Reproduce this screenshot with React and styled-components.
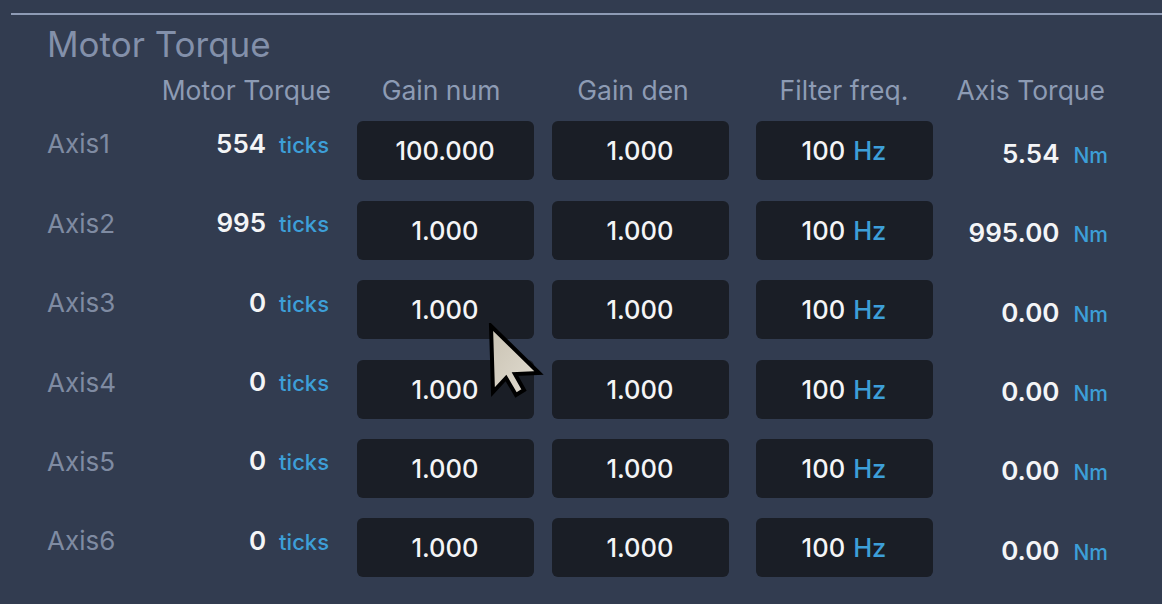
import React from 'react';
import styled, { createGlobalStyle } from 'styled-components';

const rows = [
    { axis: 'Axis1', ticks: '554', num: '100.000', den: '1.000', freq: '100', torque: '5.54' },
    { axis: 'Axis2', ticks: '995', num: '1.000', den: '1.000', freq: '100', torque: '995.00' },
    { axis: 'Axis3', ticks: '0', num: '1.000', den: '1.000', freq: '100', torque: '0.00' },
    { axis: 'Axis4', ticks: '0', num: '1.000', den: '1.000', freq: '100', torque: '0.00' },
    { axis: 'Axis5', ticks: '0', num: '1.000', den: '1.000', freq: '100', torque: '0.00' },
    { axis: 'Axis6', ticks: '0', num: '1.000', den: '1.000', freq: '100', torque: '0.00' },
];

const Cursor = () => (
    <CursorWrap>
        <svg width="60" height="80" viewBox="0 0 60 80">
            <defs>
                <linearGradient id="cur" x1="0" y1="0" x2="1" y2="1">
                    <stop offset="0" stopColor="#c9c2b2" />
                    <stop offset="1" stopColor="#e2ddd2" />
                </linearGradient>
            </defs>
            <path
                d="M4 3 L6 69 L19 55 L29 72 L37 67 L28 51 L52 50 Z"
                fill="url(#cur)"
                stroke="#000"
                strokeWidth="4"
                strokeLinejoin="miter"
            />
        </svg>
    </CursorWrap>
);

const App = () => {
    return (
        <Page>
            <GlobalStyle />
            <Divider />
            <Section>
                <Title>Motor Torque</Title>
                <Table>
                    <span />
                    <HeadCell $align="right" $pad={16}>Motor Torque</HeadCell>
                    <HeadCell $pad={8}>Gain num</HeadCell>
                    <HeadCell $pad={14}>Gain den</HeadCell>
                    <HeadCell>Filter freq.</HeadCell>
                    <HeadCell $align="right" $pad={15}>Axis Torque</HeadCell>

                    {rows.map((r) => (
                        <React.Fragment key={r.axis}>
                            <AxisLabel>{r.axis}</AxisLabel>
                            <Reading>
                                <Value>{r.ticks}</Value>
                                <Unit>ticks</Unit>
                            </Reading>
                            <FieldBox>{r.num}</FieldBox>
                            <FieldBox>{r.den}</FieldBox>
                            <FieldBox>
                                {r.freq}
                                <BoxUnit>Hz</BoxUnit>
                            </FieldBox>
                            <TorqueReading>
                                <Value>{r.torque}</Value>
                                <SmallUnit>Nm</SmallUnit>
                            </TorqueReading>
                        </React.Fragment>
                    ))}
                </Table>
            </Section>
            <Cursor />
        </Page>
    );
};

const GlobalStyle = createGlobalStyle`
    html, body {
        margin: 0;
        padding: 0;
        background: #323c50;
    }
    body {
        font-family: Inter, 'Noto Sans', sans-serif;
    }
`;

const Page = styled.div`
    position: relative;
    width: 1162px;
    height: 604px;
    overflow: hidden;
    background: #323c50;
    padding-top: 13px;
    box-sizing: border-box;
`;

const Divider = styled.div`
    height: 2px;
    margin-left: 11px;
    background: #8e9bb5;
`;

const Section = styled.div`
    padding-left: 47px;
`;

const Title = styled.div`
    font-size: 35px;
    line-height: 40px;
    color: #8390aa;
    margin-top: 9px;
`;

const Table = styled.div`
    display: grid;
    grid-template-columns: 110px 190px 196px 194px 214px 169px;
    grid-template-rows: 30px repeat(6, 59px);
    row-gap: 20.4px;
    margin-top: 7px;
    align-items: center;
`;

const HeadCell = styled.div`
    font-size: 26.5px;
    line-height: 30px;
    color: #8d9bb4;
    text-align: ${(p) => (p.$align === 'right' ? 'right' : 'center')};
    padding-right: ${(p) => p.$pad || 0}px;
    white-space: nowrap;
    align-self: start;
    margin-top: 4px;
`;

const AxisLabel = styled.div`
    font-size: 26px;
    color: #7f8ba2;
    margin-bottom: 14px;
`;

const Reading = styled.div`
    display: flex;
    justify-content: flex-end;
    align-items: baseline;
    gap: 13px;
    padding-right: 18px;
    margin-bottom: 15px;
`;

const Value = styled.span`
    font-size: 26px;
    font-weight: 600;
    color: #f4f5f7;
`;

const Unit = styled.span`
    font-size: 22px;
    font-weight: 500;
    color: #3d9fd8;
`;

const SmallUnit = styled.span`
    font-size: 21px;
    font-weight: 500;
    color: #3d9fd8;
`;

const TorqueReading = styled.div`
    display: flex;
    justify-content: flex-end;
    align-items: baseline;
    gap: 14px;
    padding-right: 12px;
    margin-top: 5px;
`;

const FieldBox = styled.div`
    justify-self: center;
    width: 177px;
    height: 59px;
    border-radius: 6px;
    background: #1a1e26;
    display: flex;
    align-items: center;
    justify-content: center;
    gap: 8px;
    font-size: 25.5px;
    font-weight: 500;
    color: #f4f5f7;
`;

const BoxUnit = styled.span`
    color: #3d9fd8;
`;

const CursorWrap = styled.div`
    position: absolute;
    left: 487px;
    top: 323px;
    pointer-events: none;
`;

export default App;
